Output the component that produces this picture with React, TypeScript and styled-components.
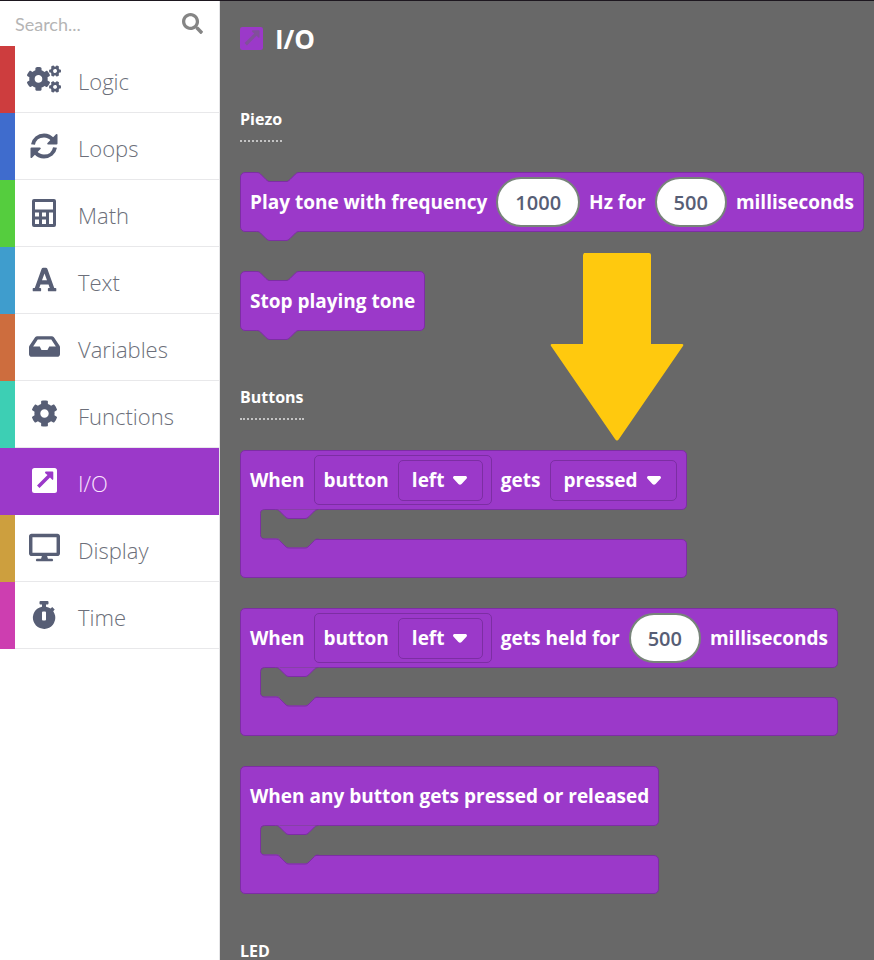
import React from "react";
import styled, { createGlobalStyle } from "styled-components";
import { FaCog, FaCogs, FaDesktop, FaFont, FaInbox, FaSearch } from "react-icons/fa";

const PURPLE = "#9b39c9";
const PURPLE_EDGE = "#7c2ea3";
const CANVAS = "#686868";
const INK = "#575e75";

const GlobalStyle = createGlobalStyle`
  * { box-sizing: border-box; }
  body { margin: 0; background: ${CANVAS}; font-family: "Open Sans", "Noto Sans", sans-serif; }
`;

const Page = styled.div`
  display: flex;
  height: 100vh;
  border-top: 1px solid #1d171f;
  overflow: hidden;
`;

const Sidebar = styled.aside`
  flex: 0 0 220px;
  min-width: 0;
  background: #fff;
  border-right: 1px solid #e4e4e6;
`;

const SearchBar = styled.label`
  display: flex;
  align-items: center;
  height: 45px;
  padding: 0 16px 0 15px;
  color: #858585;
`;

const SearchInput = styled.input`
  flex: 1;
  min-width: 0;
  padding: 0;
  border: 0;
  outline: 0;
  background: none;
  font: 18px "Lato", sans-serif;
  color: #555;
  &::placeholder { color: #b5b5b5; opacity: 1; }
`;

const CategoryList = styled.nav`
  display: flex;
  flex-direction: column;
`;

const Category = styled.button<{ $color: string; $active?: boolean }>`
  display: flex;
  align-items: center;
  height: 67px;
  padding: 0;
  border: 0;
  border-left: 15px solid ${(p) => p.$color};
  box-shadow: inset 0 -1px ${(p) => (p.$active ? p.$color : "#e8e8ea")};
  background: ${(p) => (p.$active ? p.$color : "#fff")};
  color: ${(p) => (p.$active ? "#fff" : INK)};
  text-align: left;
  cursor: pointer;
`;

const CategoryIcon = styled.span`
  display: flex;
  justify-content: center;
  flex: 0 0 58px;
  padding-bottom: 2px;
`;

const CategoryName = styled.span<{ $active?: boolean }>`
  padding: 3px 0 0 5px;
  font: 300 22px/32px "Open Sans", sans-serif;
  color: ${(p) => (p.$active ? "#fbe6ff" : "#6c6f7a")};
`;

const Flyout = styled.main`
  position: relative;
  flex: 1;
  min-width: 0;
  padding-left: 20px;
  background: ${CANVAS};
  color: #fff;
  overflow: auto;
  scrollbar-width: none;
`;

const Title = styled.h1`
  display: flex;
  align-items: center;
  gap: 12px;
  height: 91px;
  margin: 0;
  padding-bottom: 16px;
  font-size: 26px;
  font-weight: 700;
`;

const Section = styled.section`
  display: flex;
  flex-direction: column;
  align-items: flex-start;
  gap: 30px;
  padding-bottom: 30px;
`;

const SectionTitle = styled.h2`
  margin: 0;
  padding: 15px 0 9px;
  border-bottom: 2px dotted #c4c4c4;
  font-size: 16px;
  line-height: 24px;
  font-weight: 700;
`;

const BlockRow = styled.div`
  display: flex;
  align-items: center;
  gap: 9px;
  height: 60px;
  padding: 0 9px;
  border: 1px solid ${PURPLE_EDGE};
  border-radius: 5px;
  background: ${PURPLE};
  font-size: 19px;
  font-weight: 700;
  white-space: nowrap;
`;

const Statement = styled.div`
  position: relative;
  padding-bottom: 9px;
`;

const TopNotch = styled.svg`
  position: absolute;
  top: 0;
  left: 16px;
`;

const BottomTab = styled.svg`
  position: absolute;
  bottom: -1px;
  left: 16px;
`;

const Event = styled.div`
  display: flex;
  flex-direction: column;
`;

const EventHead = styled(BlockRow)`
  border-bottom-left-radius: 0;
`;

const EventBody = styled.div`
  position: relative;
  height: 29px;
`;

const Mouth = styled.svg`
  position: absolute;
  top: -1px;
  left: 0;
`;

const EventFoot = styled.div`
  height: 39px;
  border: 1px solid ${PURPLE_EDGE};
  border-radius: 0 5px 5px 5px;
  background: ${PURPLE};
`;

const NumberInput = styled.input<{ $digits: number }>`
  width: calc(${(p) => p.$digits}ch + 38px);
  height: 50px;
  padding: 0;
  border: 2px solid #77847a;
  border-radius: 25px;
  background: #fff;
  color: ${INK};
  font: 600 20px "Open Sans", sans-serif;
  text-align: center;
`;

const ButtonGroup = styled.label`
  display: flex;
  align-items: center;
  gap: 9px;
  height: 50px;
  padding: 0 8px 0 9px;
  border: 1px solid ${PURPLE_EDGE};
  border-radius: 5px;
`;

const Picker = styled.span`
  display: flex;
  align-items: center;
  position: relative;
  height: 41px;
  border: 1px solid ${PURPLE_EDGE};
  border-radius: 5px;
`;

const PickerSelect = styled.select`
  appearance: none;
  height: 100%;
  padding: 0 37px 0 13px;
  border: 0;
  background: transparent;
  color: #fff;
  font: inherit;
`;

const PickerCaret = styled.svg`
  position: absolute;
  right: 15px;
  pointer-events: none;
`;

const Pointer = styled.svg`
  position: absolute;
  top: 252px;
  left: 330px;
  pointer-events: none;
`;

const RefreshIcon = () => (
  <svg width="28" height="28" viewBox="0 0 28 28" fill="none" stroke="currentColor" strokeWidth="4" aria-hidden="true">
    <path d="M3 12.500C4 7 8.500 3.500 14 3.500c3.500 0 6.500 1.500 9 4.500M25 15.500c-1 5.500-5.500 9-11 9-3.500 0-6.500-1.500-9-4.500" />
    <path d="M27.500 2.500v9a1 1 0 0 1-1 1H18q-1.500-.5-.5-1.500L26 2.200q1-.7 1.500.3zM.5 25.500v-9a1 1 0 0 1 1-1H10q1.500.5.5 1.500L2 25.800q-1 .7-1.500-.3z" fill="currentColor" stroke="none" />
  </svg>
);

const CalculatorIcon = () => (
  <svg width="24" height="28" viewBox="0 0 24 28" fill="currentColor" fillRule="evenodd" aria-hidden="true">
    <path d="M2 0h20a2 2 0 0 1 2 2v24a2 2 0 0 1-2 2H2a2 2 0 0 1-2-2V2a2 2 0 0 1 2-2zM3 3v7.500h18V3zM3 13.500v4h4v-4zM10 13.500v4h4v-4zM17 13.500V25h4V13.500zM3 20.500V25h4v-4.500zM10 20.500V25h4v-4.500z" />
  </svg>
);

const ArrowSquareIcon = ({ size, color, arrow }: { size: number; color: string; arrow: string }) => (
  <svg width={size} height={size} viewBox="0 0 25 25" aria-hidden="true">
    <rect width="25" height="25" rx="2.500" fill={color} />
    <path d="M13 4.500q0-1 1-1h6.500q.8 0 .8.800V11q-.3 1.500-1.300.5L18 9.500 7.500 20 5 17.500 15.500 7 13.500 5.500z" fill={arrow} />
  </svg>
);

const StopwatchIcon = () => (
  <svg width="24" height="28" viewBox="0 0 24 28" fill="currentColor" fillRule="evenodd" aria-hidden="true">
    <path d="M8.500 0h7a1 1 0 0 1 1 1v1.500a1 1 0 0 1-1 1H14v2.200a11 11 0 0 1 4.700 1.900l1.500-1.500 2.500 2.500-1.500 1.600A11.200 11.200 0 1 1 10 5.700V3.500H8.500a1 1 0 0 1-1-1V1a1 1 0 0 1 1-1zM11 10.500a1 1 0 0 0-1 1v7a1 1 0 0 0 1 1h2a1 1 0 0 0 1-1v-7a1 1 0 0 0-1-1z" />
  </svg>
);

const categories = [
  { name: "Logic", color: "#cd3d3e", icon: <FaCogs size={34} /> },
  { name: "Loops", color: "#3f6ccd", icon: <RefreshIcon /> },
  { name: "Math", color: "#55cd3e", icon: <CalculatorIcon /> },
  { name: "Text", color: "#3f9dcd", icon: <FaFont size={27} /> },
  { name: "Variables", color: "#cd6d3e", icon: <FaInbox size={31} /> },
  { name: "Functions", color: "#3dcfb4", icon: <FaCog size={27} /> },
  { name: "I/O", color: PURPLE, icon: <ArrowSquareIcon size={25} color="#fff" arrow={PURPLE} />, active: true },
  { name: "Display", color: "#cd9f3e", icon: <FaDesktop size={31} /> },
  { name: "Time", color: "#cd3eb0", icon: <StopwatchIcon /> },
];

// Connector outline shared by notches and tabs, drawn left to right.
const NOTCH = "c2 0 3 .5 4 1.500l5.500 5.500c1.500 1.500 2.500 2 4 2h16c1.500 0 2.500-.5 4-2l5.500-5.500c1-1 2-1.500 4-1.500";

function StatementBlock({ children }: { children: React.ReactNode }) {
  return (
    <Statement>
      <BlockRow>{children}</BlockRow>
      <TopNotch width="44" height="11" aria-hidden="true">
        <path d={`M.5 .5${NOTCH}V-1H.5z`} fill={CANVAS} />
        <path d={`M.5 .5${NOTCH}`} fill="none" stroke={PURPLE_EDGE} />
      </TopNotch>
      <BottomTab width="44" height="12" aria-hidden="true">
        <path d={`M.5 1.500${NOTCH}V0H.5z`} fill={PURPLE} />
        <path d={`M.5 1.500${NOTCH}`} fill="none" stroke={PURPLE_EDGE} />
      </BottomTab>
    </Statement>
  );
}

function EventBlock({ children }: { children: React.ReactNode }) {
  return (
    <Event>
      <EventHead>{children}</EventHead>
      <EventBody>
        <Mouth width="80" height="42" aria-hidden="true">
          <path d="M0 0H40V31H0z" fill={PURPLE} />
          <path d="M80 .5V29.500H24.500a4 4 0 0 1-4-4V4.500a4 4 0 0 1 4-4z" fill={CANVAS} />
          <path d={`M35.500 29.500${NOTCH}z`} fill={CANVAS} />
          <path d={`M35.500 .5${NOTCH}z`} fill={PURPLE} />
          <path
            d={`M35.500 .5H24.500a4 4 0 0 0-4 4v21a4 4 0 0 0 4 4.500H35.500${NOTCH}M35.500 .5${NOTCH}`}
            fill="none"
            stroke={PURPLE_EDGE}
          />
          <path d="M.5 0V31" stroke={PURPLE_EDGE} />
        </Mouth>
      </EventBody>
      <EventFoot />
    </Event>
  );
}

function Dropdown({ label, value }: { label: string; value: string }) {
  return (
    <Picker>
      <PickerSelect aria-label={label} defaultValue={value}>
        <option>{value}</option>
      </PickerSelect>
      <PickerCaret width="14" height="9" viewBox="0 0 14 9" aria-hidden="true">
        <path d="M2 0h10c2 0 2.500 1.500 1.400 2.700L8.600 8c-1 1-2.200 1-3.200 0L.6 2.700C-.5 1.500 0 0 2 0z" fill="#fff" />
      </PickerCaret>
    </Picker>
  );
}

const ButtonPicker = () => (
  <ButtonGroup>
    button
    <Dropdown label="button" value="left" />
  </ButtonGroup>
);

export default function App() {
  return (
    <>
      <GlobalStyle />
      <Page>
        <Sidebar>
          <SearchBar>
            <SearchInput type="text" aria-label="Search" placeholder="Search..." />
            <FaSearch size={21} />
          </SearchBar>
          <CategoryList>
            {categories.map((c) => (
              <Category key={c.name} type="button" $color={c.color} $active={c.active}>
                <CategoryIcon>{c.icon}</CategoryIcon>
                <CategoryName $active={c.active}>{c.name}</CategoryName>
              </Category>
            ))}
          </CategoryList>
        </Sidebar>
        <Flyout>
          <Title>
            <ArrowSquareIcon size={23} color={PURPLE} arrow="#80509a" />
            I/O
          </Title>
          <Section>
            <SectionTitle>Piezo</SectionTitle>
            <StatementBlock>
              <span>Play tone with frequency</span>
              <NumberInput $digits={4} aria-label="Frequency" defaultValue="1000" />
              <span>Hz for</span>
              <NumberInput $digits={3} aria-label="Duration" defaultValue="500" />
              <span>milliseconds</span>
            </StatementBlock>
            <StatementBlock>
              <span>Stop playing tone</span>
            </StatementBlock>
          </Section>
          <Section>
            <SectionTitle>Buttons</SectionTitle>
            <EventBlock>
              <span>When</span>
              <ButtonPicker />
              <span>gets</span>
              <Dropdown label="action" value="pressed" />
            </EventBlock>
            <EventBlock>
              <span>When</span>
              <ButtonPicker />
              <span>gets held for</span>
              <NumberInput $digits={3} aria-label="Hold time" defaultValue="500" />
              <span>milliseconds</span>
            </EventBlock>
            <EventBlock>
              <span>When any button gets pressed or released</span>
            </EventBlock>
          </Section>
          <Section>
            <SectionTitle>LED</SectionTitle>
          </Section>
          <Pointer width="134" height="188" aria-hidden="true">
            <path d="M34 0h65a2 2 0 0 1 2 2v89h31q2 0 1 2L69 186q-2 3-4 0L1 93q-1-2 1-2h31V2z" fill="#ffc90e" />
          </Pointer>
        </Flyout>
      </Page>
    </>
  );
}
